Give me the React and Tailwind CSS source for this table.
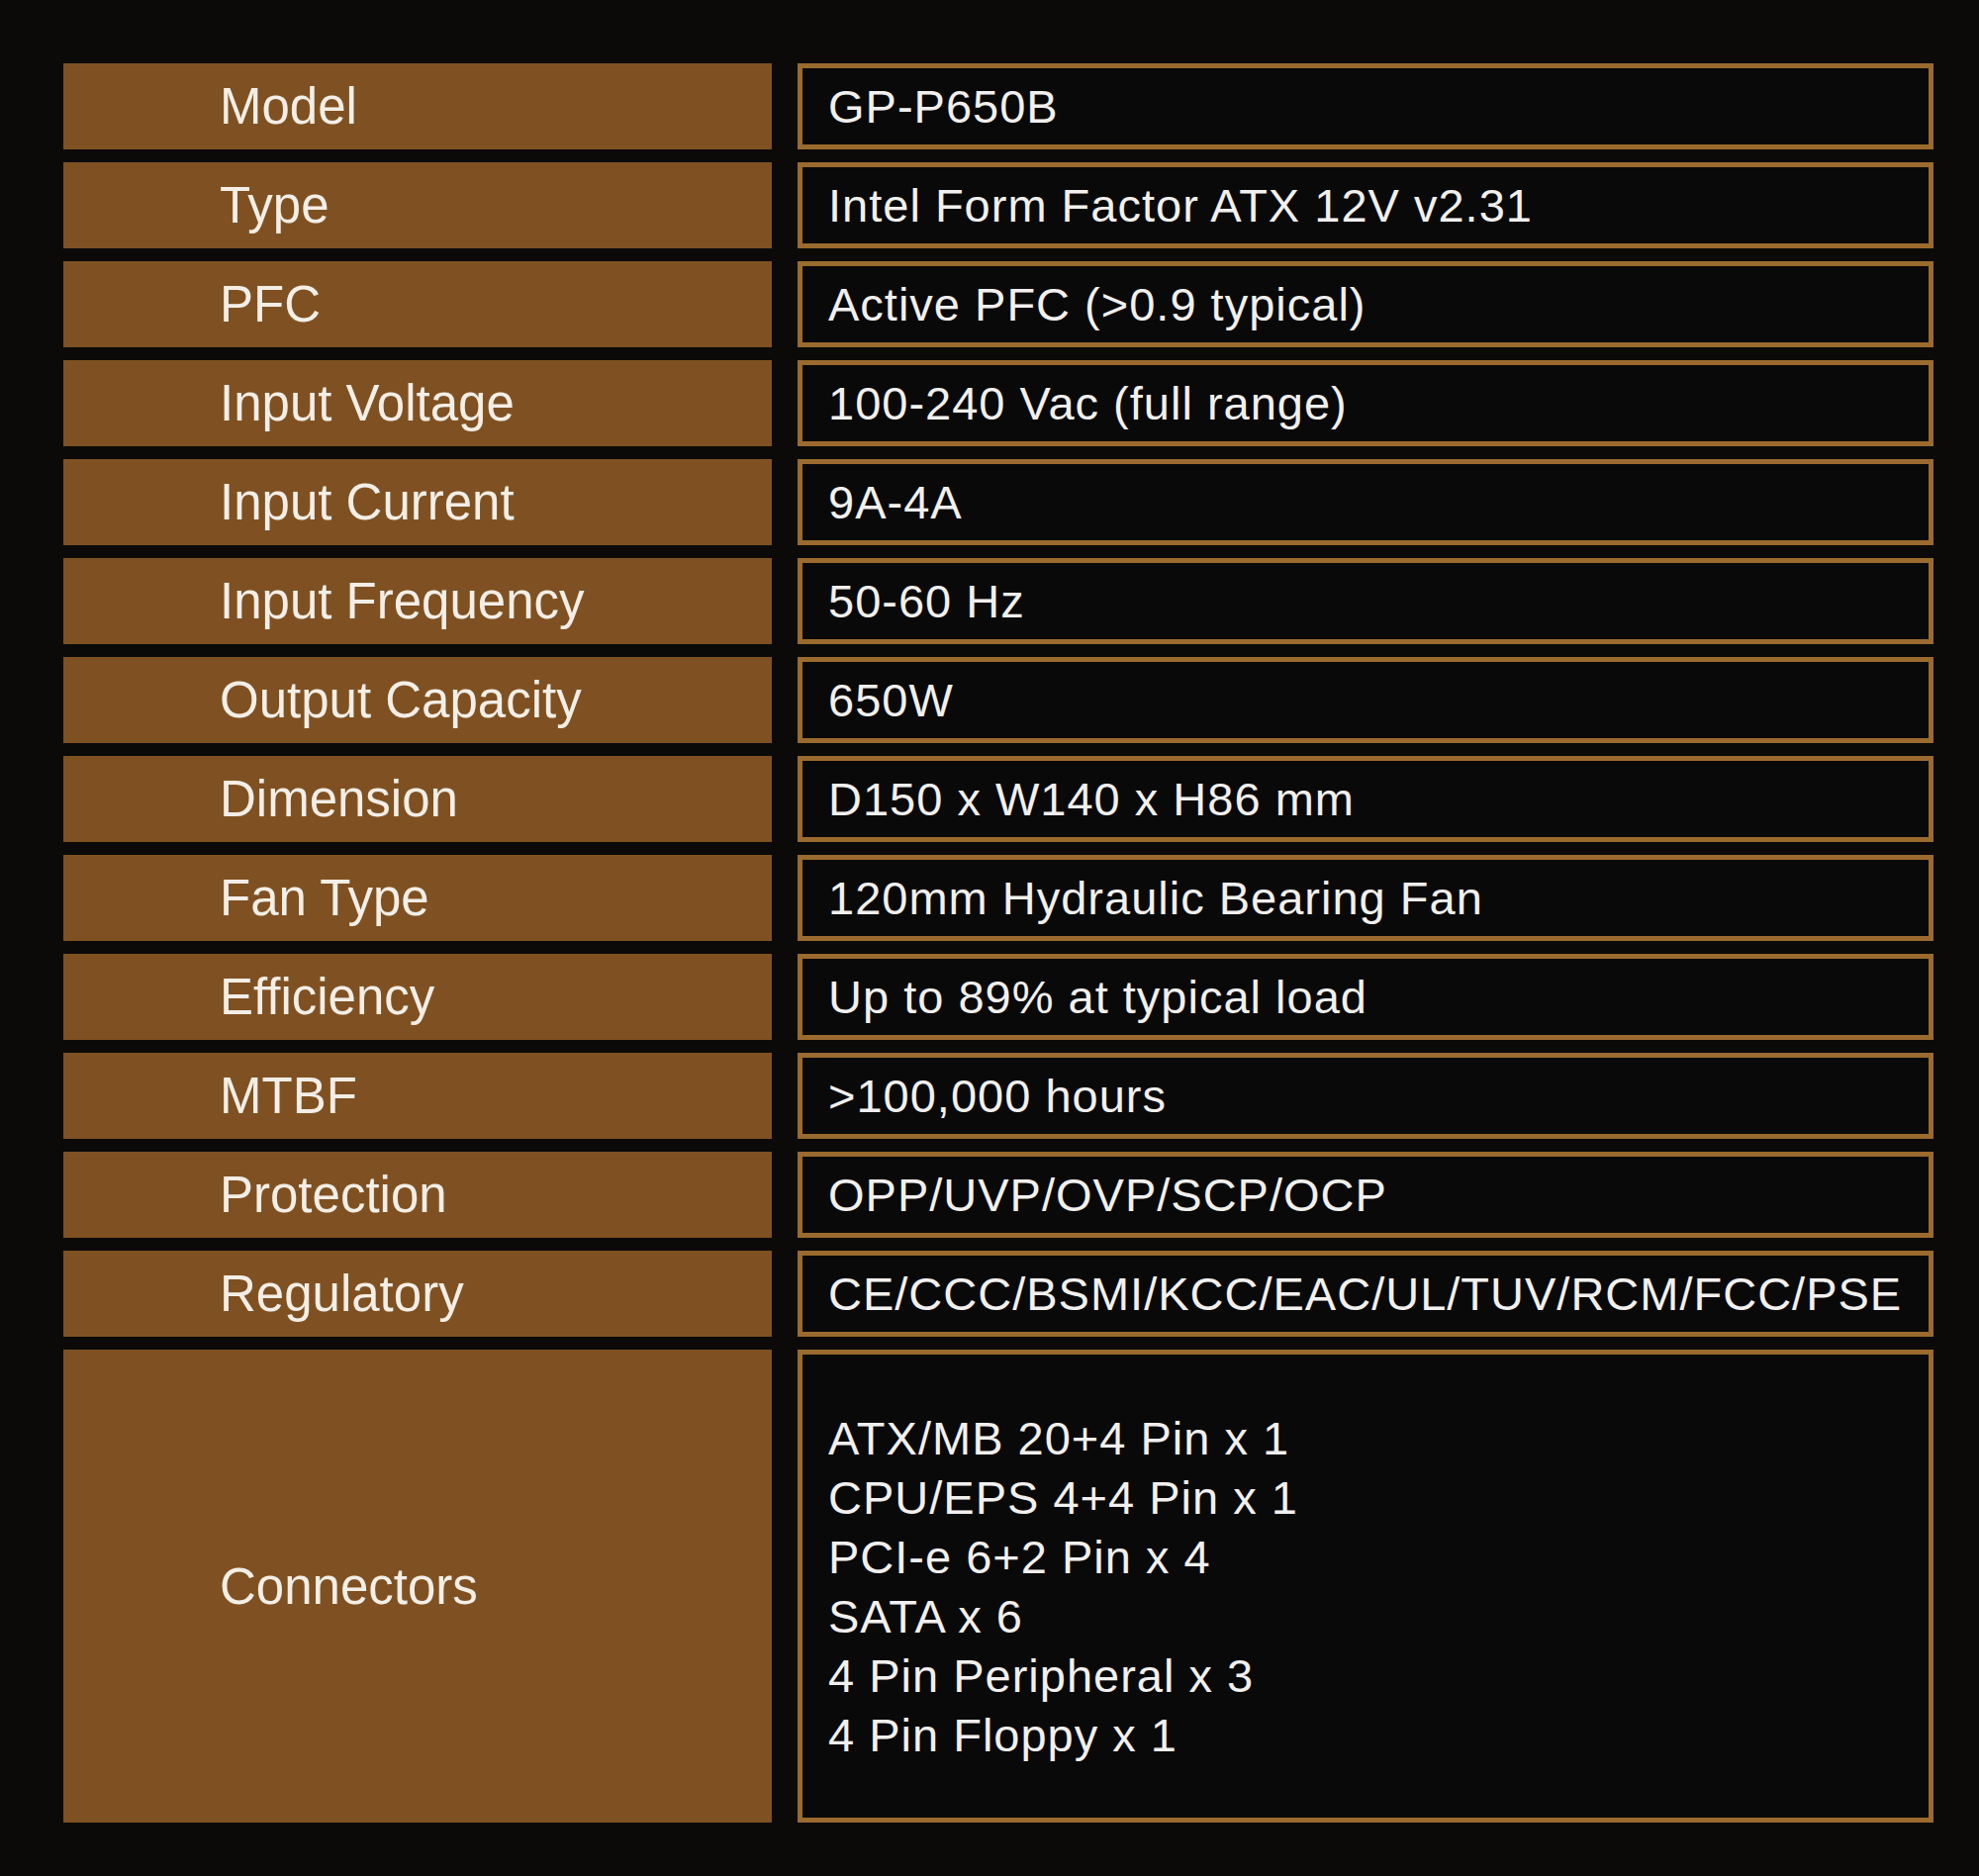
const specs = [
  ['Model', 'GP-P650B'],
  ['Type', 'Intel Form Factor ATX 12V v2.31'],
  ['PFC', 'Active PFC (>0.9 typical)'],
  ['Input Voltage', '100-240 Vac (full range)'],
  ['Input Current', '9A-4A'],
  ['Input Frequency', '50-60 Hz'],
  ['Output Capacity', '650W'],
  ['Dimension', 'D150 x W140 x H86 mm'],
  ['Fan Type', '120mm Hydraulic Bearing Fan'],
  ['Efficiency', 'Up to 89% at typical load'],
  ['MTBF', '>100,000 hours'],
  ['Protection', 'OPP/UVP/OVP/SCP/OCP'],
  ['Regulatory', 'CE/CCC/BSMI/KCC/EAC/UL/TUV/RCM/FCC/PSE'],
]

const connectors = [
  'ATX/MB 20+4 Pin x 1',
  'CPU/EPS 4+4 Pin x 1',
  'PCI-e 6+2 Pin x 4',
  'SATA x 6',
  '4 Pin Peripheral x 3',
  '4 Pin Floppy x 1',
]

function Label({ children, tall }) {
  return (
    <div
      className={`flex items-center bg-[#7f5122] pl-[158px] text-[51px] leading-none text-[#f3eee6] ${
        tall ? 'h-[478px]' : 'h-[87px]'
      }`}
    >
      {children}
    </div>
  )
}

function Value({ children, tall }) {
  return (
    <div
      className={`flex items-center border-[5px] border-[#9a6a2e] bg-[#0a0909] pl-[26px] text-[47px] leading-none tracking-[1px] text-[#f1f0ee] ${
        tall ? 'h-[478px]' : 'h-[87px]'
      }`}
    >
      {children}
    </div>
  )
}

export default function App() {
  return (
    <div
      className="w-[2000px] h-[1896px] bg-[#0b0a09] pt-[64px] pl-[64px]"
      style={{ fontFamily: '"Liberation Sans", Arial, sans-serif' }}
    >
      <div className="grid grid-cols-[716px_1148px] gap-x-[26px] gap-y-[13px]">
        {specs.map(([label, value]) => (
          <div key={label} className="contents">
            <Label>{label}</Label>
            <Value>{value}</Value>
          </div>
        ))}
        <Label tall>Connectors</Label>
        <Value tall>
          <div className="flex flex-col">
            {connectors.map((c) => (
              <div key={c} className="h-[60px] flex items-center">
                {c}
              </div>
            ))}
          </div>
        </Value>
      </div>
    </div>
  )
}
